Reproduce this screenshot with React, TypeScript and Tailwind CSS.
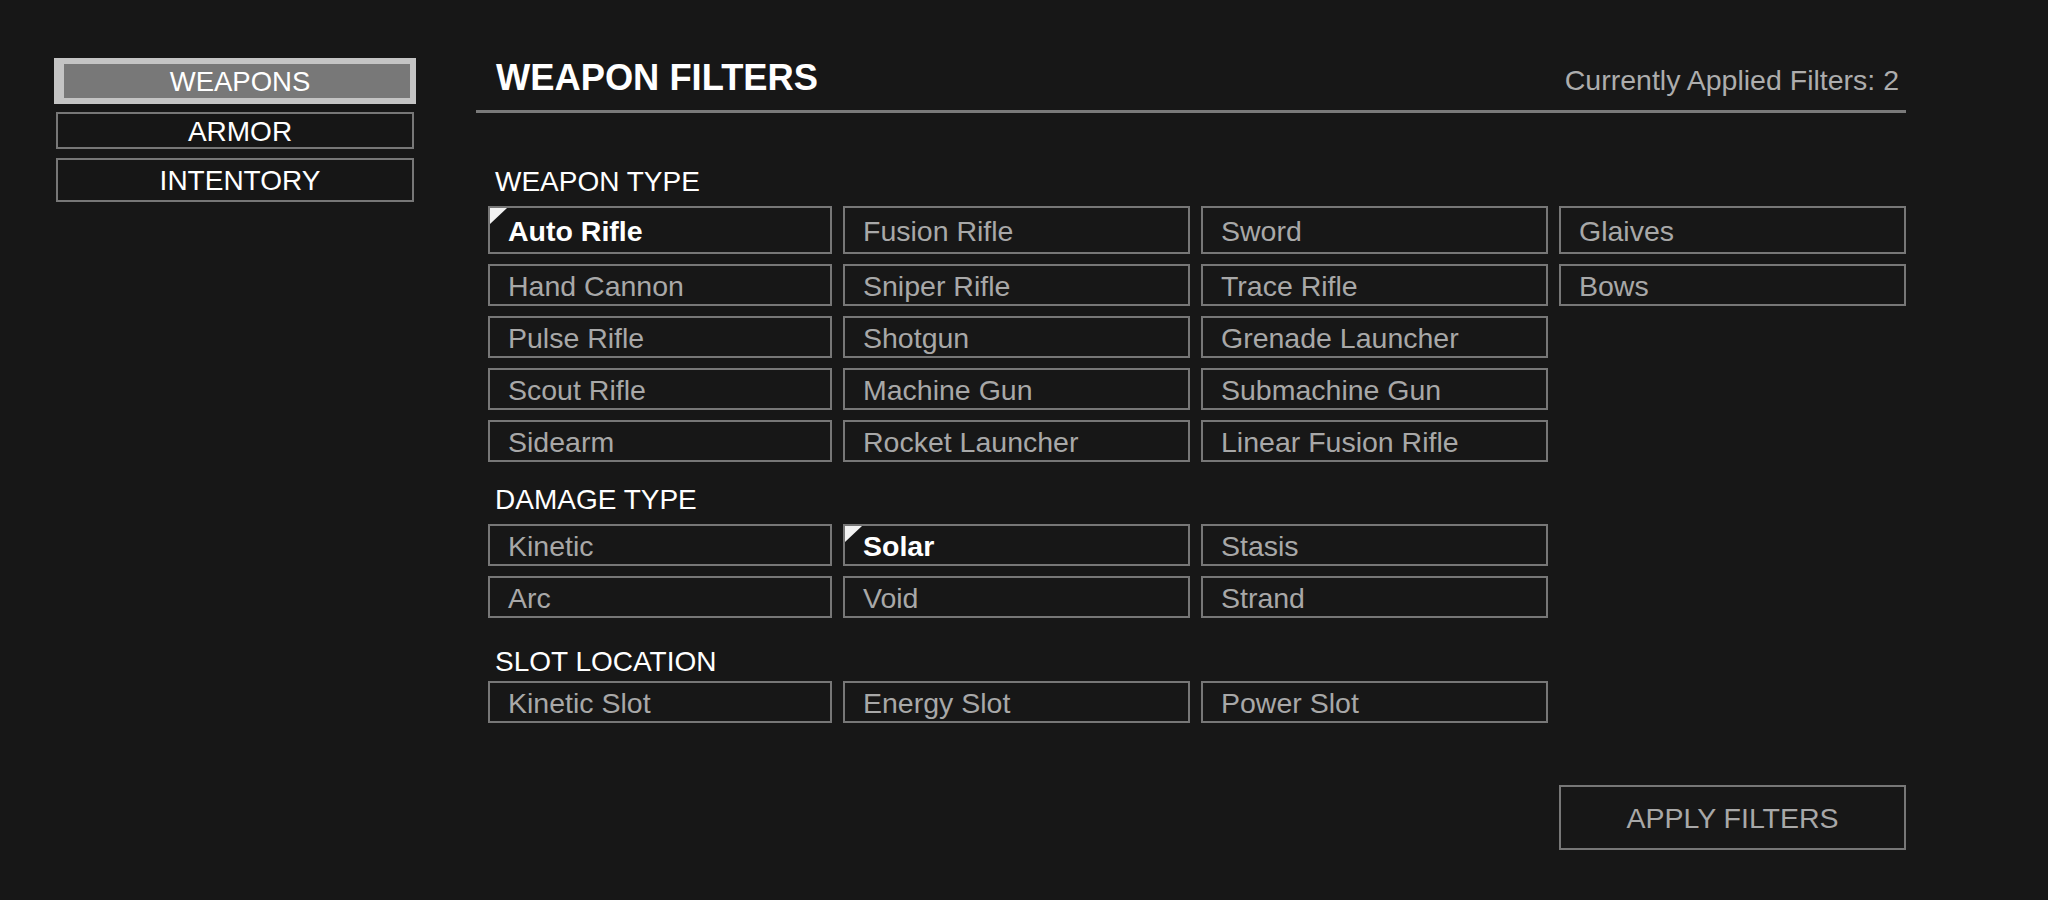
import React, { useState } from "react";

const SECTIONS = [
  {
    title: "WEAPON TYPE",
    rows: "grid-rows-[48px_repeat(4,42px)]",
    labelGap: "mt-[53px] mb-[8px]",
    items: [
      "Auto Rifle",
      "Hand Cannon",
      "Pulse Rifle",
      "Scout Rifle",
      "Sidearm",
      "Fusion Rifle",
      "Sniper Rifle",
      "Shotgun",
      "Machine Gun",
      "Rocket Launcher",
      "Sword",
      "Trace Rifle",
      "Grenade Launcher",
      "Submachine Gun",
      "Linear Fusion Rifle",
      "Glaives",
      "Bows",
    ],
  },
  {
    title: "DAMAGE TYPE",
    rows: "grid-rows-[42px_42px]",
    labelGap: "mt-[22px] mb-[8px]",
    items: ["Kinetic", "Arc", "Solar", "Void", "Stasis", "Strand"],
  },
  {
    title: "SLOT LOCATION",
    rows: "grid-rows-[42px]",
    labelGap: "mt-[28px] mb-[3px]",
    items: ["Kinetic Slot", "Energy Slot", "Power Slot"],
  },
];

const TABS = [
  { name: "WEAPONS", height: "h-[46px]" },
  { name: "ARMOR", height: "h-[37px]" },
  { name: "INTENTORY", height: "h-[44px]" },
];

const App: React.FC = () => {
  const [activeTab, setActiveTab] = useState("WEAPONS");
  const [selected, setSelected] = useState<string[]>(["Auto Rifle", "Solar"]);

  const toggleFilter = (name: string) => {
    setSelected((prev) =>
      prev.includes(name) ? prev.filter((n) => n !== name) : [...prev, name]
    );
  };

  return (
    <div className="min-h-screen bg-[#171717] font-['Liberation_Sans',Arial,sans-serif] flex">
      {/* Sidebar tabs */}
      <div className="pl-[54px] pt-[58px] w-[416px] shrink-0 flex flex-col">
        {TABS.map((tab, i) => {
          const active = tab.name === activeTab;
          return (
            <button
              key={tab.name}
              onClick={() => setActiveTab(tab.name)}
              className={
                active
                  ? `${tab.height} flex items-center justify-center pl-[6px] pt-[2px] border-[6px] border-l-[10px] border-[#c4c4c4] bg-[#787878] text-white text-[27.5px] leading-none`
                  : `${tab.height} ${i === 1 ? "mt-[8px]" : "mt-[9px]"} mx-[2px] flex items-center justify-center pl-[10px] pt-[2px] border-2 border-[#777777] bg-[#161616] text-white text-[28px] leading-none`
              }
            >
              {tab.name}
            </button>
          );
        })}
      </div>

      {/* Filters panel */}
      <div className="ml-[60px] w-[1430px] pt-[58px]">
        <div className="flex items-baseline justify-between pl-[20px] pr-[7px] pb-[12px] border-b-[3px] border-[#7a7a7a]">
          <h1 className="text-[36.3px] leading-[40px] font-bold text-white">
            WEAPON FILTERS
          </h1>
          <span className="text-[28.5px] leading-[32px] text-[#adadad]">
            Currently Applied Filters: {selected.length}
          </span>
        </div>

        <div className="ml-[12px]">
          {SECTIONS.map((section) => (
            <div key={section.title}>
              <div
                className={`${section.labelGap} pl-[7px] text-[28px] leading-[32px] text-white`}
              >
                {section.title}
              </div>
              <div
                className={`grid grid-flow-col grid-cols-[344px_347px_347px_347px] ${section.rows} gap-x-[11px] gap-y-[10px]`}
              >
                {section.items.map((item) => {
                  const on = selected.includes(item);
                  return (
                    <button
                      key={item}
                      onClick={() => toggleFilter(item)}
                      className={`relative flex items-center pl-[18px] pt-[2px] border-2 border-[#777777] text-left text-[28.5px] leading-none ${
                        on ? "font-bold text-white" : "text-[#a8a8a8]"
                      }`}
                    >
                      {on && (
                        <span className="absolute top-0 left-0 w-0 h-0 border-t-[16px] border-t-[#f2f2f2] border-r-[17px] border-r-transparent" />
                      )}
                      {item}
                    </button>
                  );
                })}
              </div>
            </div>
          ))}

          <div className="flex justify-end mt-[62px]">
            <button className="w-[347px] h-[65px] border-2 border-[#777777] flex items-center justify-center pt-[2px] text-[28.5px] leading-none text-[#a8a8a8]">
              APPLY FILTERS
            </button>
          </div>
        </div>
      </div>
    </div>
  );
};

export default App;
